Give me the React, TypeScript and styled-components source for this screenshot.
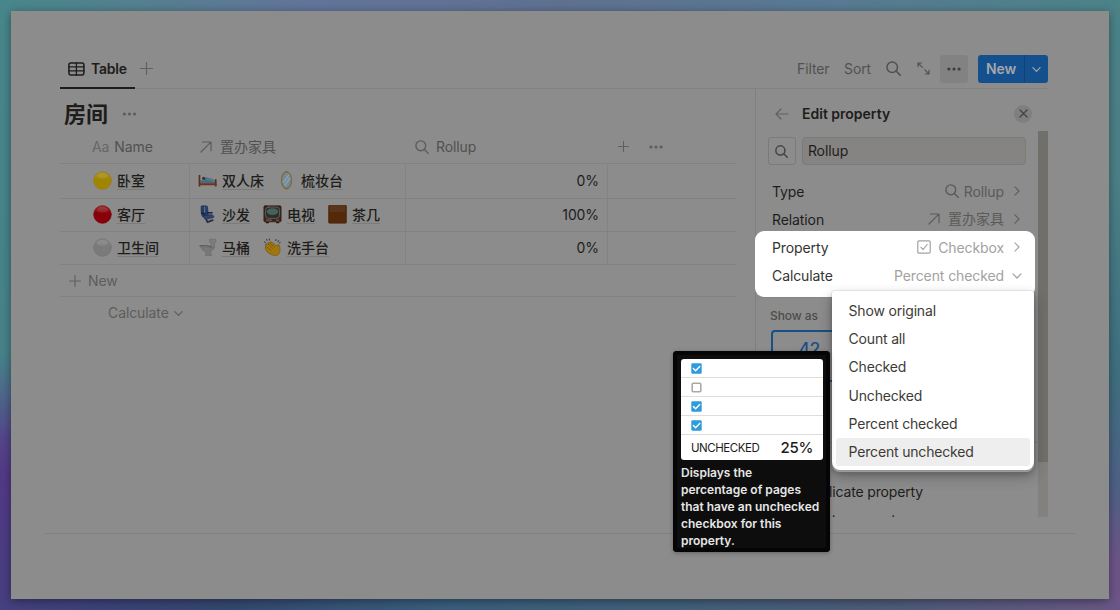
import React from "react";
import styled, { createGlobalStyle, css } from "styled-components";

const ink = "#1e1d1b";
const line = "#818180";

const GlobalStyle = createGlobalStyle`
  * { box-sizing: border-box; }
  body {
    margin: 0;
    width: 1120px;
    height: 610px;
    overflow: hidden;
    font-family: Inter, "Noto Sans CJK SC", sans-serif;
    font-size: 14px;
    letter-spacing: -0.1px;
    color: ${ink};
    -webkit-font-smoothing: antialiased;
  }
`;

const Desktop = styled.div`
  width: 1120px;
  height: 610px;
  padding: 11px;
  background:
    linear-gradient(90deg, #47878b 0, #54808f 12%, #63749a 28%, #5f7191 50%, #587a92 75%, #4b8388 100%) top / 100% 11px no-repeat,
    linear-gradient(90deg, #46407f 0, #3d4379 9%, #34486f 20%, #3a5f7e 40%, #42607a 60%, #4e5c78 80%, #6a5787 100%) bottom / 100% 11px no-repeat,
    linear-gradient(180deg, #47878b 0, #47828a 58%, #4d6b8b 64%, #54458a 72%, #533988 78%, #46407f 100%) left / 50% 100% no-repeat,
    linear-gradient(180deg, #4b8388 0, #4a8087 30%, #3f6f80 62%, #4f6187 80%, #6d5488 92%, #6f5588 100%) right / 50% 100% no-repeat;
`;

const Card = styled.main`
  position: relative;
  width: 1098px;
  height: 588px;
  padding-top: 43px;
  background: #8c8c8c;
  box-shadow: 0 2px 9px rgba(0, 0, 0, 0.4);
`;

const Toolbar = styled.header`
  display: flex;
  justify-content: space-between;
  width: 988px;
  height: 35px;
  margin-left: 49px;
  border-bottom: 1px solid ${line};
`;

const ToolGroup = styled.div`
  display: flex;
  align-items: center;
  height: 29px;
`;

const ViewTab = styled.div`
  display: flex;
  align-items: center;
  gap: 6px;
  width: 75px;
  height: 35px;
  margin: 0 5px -6px 0;
  padding: 0 0 4px 8px;
  border-bottom: 2px solid ${ink};
  font-weight: 600;
  letter-spacing: -0.25px;
`;

const ToolText = styled.span`
  width: ${(p: { $w: number }) => p.$w}px;
  white-space: nowrap;
  color: #52514f;
`;

const MoreButton = styled.div`
  display: flex;
  align-items: center;
  justify-content: center;
  width: 28px;
  height: 28px;
  margin-left: 10px;
  border-radius: 3px;
  background: #828282;
`;

const NewButton = styled.div`
  display: flex;
  width: 70px;
  height: 28px;
  margin-left: 10px;
  border-radius: 3px;
  background: #15508e;
  color: #a5a7ab;
  font-weight: 600;
  overflow: hidden;
`;

const NewLabel = styled.span`
  width: 47px;
  padding-left: 8px;
  line-height: 28px;
  border-right: 1px solid #114377;
`;

const NewCaret = styled.span`
  display: flex;
  flex: 1;
  align-items: center;
  justify-content: center;
`;

const Content = styled.div`
  display: flex;
  justify-content: space-between;
  width: 988px;
  height: 428px;
  margin-left: 49px;
`;

const Database = styled.section`
  width: 676px;
`;

const TitleRow = styled.div`
  display: flex;
  align-items: center;
  gap: 14px;
  height: 41px;
  padding: 9px 0 0 4px;
`;

const Title = styled.h1`
  margin: 0;
  font-size: 22px;
  line-height: 30px;
  font-weight: 700;
`;

const TableRow = styled.div`
  display: grid;
  grid-template-columns: 130px 216px 202px 128px;
  height: ${(p: { $h: number }) => p.$h}px;
  border-bottom: 1px solid ${line};
`;

const HeadCell = styled.div`
  display: flex;
  align-items: center;
  gap: ${(p: { $gap: number; $pad: number }) => p.$gap}px;
  padding-left: ${(p) => p.$pad}px;
  color: #52514f;
`;

const Aa = styled.span`
  color: #686765;
`;

const HanLabel = styled.span`
  margin-bottom: 2px;
  letter-spacing: 0;
`;

const Cell = styled.div<{ $pad?: number; $last?: boolean; $right?: boolean }>`
  display: flex;
  align-items: center;
  gap: 13px;
  padding: 0 0 1px ${(p) => p.$pad ?? 0}px;
  ${(p) => !p.$last && css`border-right: 1px solid #838382;`}
  ${(p) => p.$right && css`justify-content: flex-end; padding-right: 8px;`}
`;

const Chip = styled.span`
  display: flex;
  align-items: center;
  gap: 5px;
`;

const PageName = styled.span`
  font-size: 14px;
  line-height: 17px;
  letter-spacing: 0;
  font-weight: 500;
  border-bottom: 1px solid #7b7b7a;
`;

const NewRow = styled.div`
  display: flex;
  align-items: center;
  gap: 7px;
  height: 32px;
  padding-left: 9px;
  border-bottom: 1px solid ${line};
  color: #5e5d5b;
`;

const CalcRow = styled.div`
  display: flex;
  align-items: center;
  gap: 5px;
  height: 31px;
  padding-left: 48px;
  color: #5e5d5b;
`;

const Panel = styled.aside`
  width: 293px;
  box-shadow: inset 1px 0 0 #7f7f7f;
`;

const PanelHead = styled.div`
  display: flex;
  align-items: center;
  height: 42px;
  padding: 7px 16px 0 20px;
`;

const PanelTitle = styled.span`
  flex: 1;
  margin-left: 13px;
  font-weight: 600;
  letter-spacing: 0;
`;

const CloseButton = styled.span`
  display: flex;
  align-items: center;
  justify-content: center;
  width: 18px;
  height: 18px;
  border-radius: 50%;
  background: #7f7f7f;
`;

const PanelBody = styled.div`
  display: flex;
  height: 386px;
  overflow: hidden;
`;

const PanelMain = styled.div`
  width: 283px;
`;

const ScrollTrack = styled.div`
  width: 10px;
  height: 386px;
  background: #82817e;
`;

const ScrollThumb = styled.div`
  height: 331px;
  background: #716f6a;
`;

const SearchRow = styled.div`
  display: flex;
  gap: 6px;
  height: 46px;
  padding: 6px 12px 12px 13px;
`;

const IconBox = styled.div`
  display: flex;
  align-items: center;
  justify-content: center;
  width: 28px;
  border: 1px solid #7b7b7b;
  border-radius: 3px;
`;

const NameInput = styled.div`
  width: 225px;
  padding-left: 5px;
  line-height: 26px;
  border: 1px solid #7a7a79;
  border-radius: 4px;
  background: #858482;
`;

const PropRow = styled.div`
  display: flex;
  align-items: center;
  width: 280px;
  height: 28px;
  padding: 0 12px 0 17px;
`;

const PropValue = styled.span<{ $bright?: boolean }>`
  display: flex;
  align-items: center;
  gap: 7px;
  margin-left: auto;
  color: ${(p) => (p.$bright ? "#a3a29f" : "#5b5a58")};
`;

const ValueLabel = styled.span<{ $gap?: number }>`
  display: flex;
  align-items: center;
  gap: ${(p) => p.$gap ?? 0}px;
`;

const CaretSlot = styled.span`
  display: flex;
  justify-content: center;
  width: 12px;
`;

const Spotlight = styled.div`
  width: 280px;
  height: 66px;
  margin-top: -2px;
  padding-top: 2px;
  border-radius: 9px;
  background: #fff;
  color: #35342f;
`;

const ShowAs = styled.div`
  height: 33px;
  padding: 9px 0 0 15px;
  border-top: 1px solid #858585;
  font-size: 12px;
  line-height: 17px;
  font-weight: 500;
  color: #4d4c4a;
`;

const NumberCard = styled.div`
  width: 80px;
  height: 52px;
  margin-left: 16px;
  padding: 7px 3px 0 0;
  border: 2px solid #174f87;
  border-radius: 4px;
  color: #174f87;
  font-size: 17px;
  font-weight: 500;
  text-align: center;
`;

const Divider = styled.div`
  height: 61px;
  margin-bottom: 35px;
  border-bottom: 1px solid ${line};
`;

const ActionRow = styled.div`
  height: 28px;
  padding-left: 47.5px;
  line-height: 28px;
  letter-spacing: -0.15px;
  white-space: nowrap;
`;

const Footer = styled.div`
  width: 1030px;
  margin: 16px 0 0 34px;
  border-top: 1px solid ${line};
`;

const Menu = styled.div`
  position: absolute;
  left: 821px;
  top: 280px;
  width: 202px;
  height: 179px;
  padding: 6px 4px;
  border-radius: 3px 3px 8px 8px;
  background: #fff;
  box-shadow: 0 0 0 1px rgba(15, 15, 15, 0.06), 0 2px 1px rgba(190, 190, 190, 0.7), 0 6px 14px rgba(0, 0, 0, 0.3), 0 3px 5px rgba(0, 0, 0, 0.2);
`;

const MenuItem = styled.div<{ $active?: boolean }>`
  height: 28.2px;
  padding-left: 12.5px;
  line-height: 28px;
  letter-spacing: -0.17px;
  border-radius: 3px;
  color: #3d3b36;
  background: ${(p) => (p.$active ? "#eeeeee" : "transparent")};
`;

const Tooltip = styled.div`
  position: absolute;
  left: 662px;
  top: 340px;
  width: 157px;
  height: 201px;
  padding: 8px;
  border-radius: 4px;
  background: #0d0d0d;
  box-shadow: inset 0 0 0 4px #050505, 0 1px 4px rgba(0, 0, 0, 0.3);
`;

const Sample = styled.div`
  width: 142px;
  height: 101px;
  border-radius: 3px;
  background: #fff;
`;

const SampleRow = styled.div`
  display: flex;
  align-items: center;
  height: 19px;
  padding-left: 10px;
  border-bottom: 1px solid #dedede;
`;

const SampleTotal = styled.div`
  display: flex;
  align-items: center;
  justify-content: space-between;
  height: 24px;
  padding: 1px 10px 0;
  color: #1c1c1c;
  font-size: 11.5px;
  letter-spacing: -0.45px;
`;

const Percent = styled.strong`
  font-size: 15px;
  font-weight: 500;
  letter-spacing: -0.3px;
`;

const TipText = styled.p`
  width: 146px;
  margin: 4px 0 0;
  color: #e6e6e6;
  font-size: 12px;
  line-height: 17px;
  letter-spacing: 0;
  font-weight: 600;
  white-space: pre;
`;

const Svg = styled.svg`
  display: block;
  flex: none;
  fill: none;
  stroke: currentColor;
  stroke-linecap: round;
  stroke-linejoin: round;
`;

const Search = ({ s = 14, c = "#52514f", w = 1.4 }) => (
  <Svg width={s} height={s} viewBox="0 0 14 14" color={c} strokeWidth={w}>
    <circle cx="5.8" cy="5.8" r="4.9" />
    <path d="M9.4 9.4 13.2 13.2" />
  </Svg>
);
const Plus = ({ s = 12, c = "#60605e" }) => (
  <Svg width={s} height={s} viewBox="0 0 12 12" color={c} strokeWidth="1.1">
    <path d="M6 .5v11M.5 6h11" />
  </Svg>
);
const Dots = ({ c = "#52514f", s = 14 }) => (
  <Svg width={s} height="4" viewBox="0 0 14 4" color={c}>
    <g fill={c} stroke="none">
      <circle cx="1.9" cy="2" r="1.6" /><circle cx="7" cy="2" r="1.6" /><circle cx="12.1" cy="2" r="1.6" />
    </g>
  </Svg>
);
const Down = ({ c = "#5e5d5b", s = 9 }) => (
  <Svg width={s} height={s * 0.6 + 2} viewBox="0 -2 10 8" color={c} strokeWidth="1.3">
    <path d="M1 .9 5 5 9 .9" />
  </Svg>
);
const Right = ({ c = "#5e5d5b" }) => (
  <Svg width="6" height="10" viewBox="0 0 6 10" color={c} strokeWidth="1.1">
    <path d="M.9 .8 5 5 .9 9.2" />
  </Svg>
);
const UpRight = ({ c = "#5e5d5b" }) => (
  <Svg width="12" height="12" viewBox="0 0 12 12" color={c} strokeWidth="1.2">
    <path d="M1 11 10.800 1.200M2.200 1h8.800v8.800" />
  </Svg>
);

const SampleCheck = ({ on }: { on: boolean }) => (
  <Svg width="11" height="11" viewBox="0 0 11 11">
    {on ? (
      <>
        <rect x=".3" y=".3" width="10.4" height="10.4" rx="1.3" fill="#2e9bdc" stroke="none" />
        <path d="M2.4 5.6 4.6 7.8 8.7 3.4" stroke="#fff" strokeWidth="1.4" />
      </>
    ) : (
      <rect x="1.2" y="1.2" width="8.6" height="8.6" rx="1" stroke="#a9a9a9" strokeWidth="1.6" />
    )}
  </Svg>
);

const ballColors: Record<string, string[]> = {
  yellow: ["#a99225", "#a08600", "#a17a00"],
  red: ["#9b3030", "#87000a", "#7e0008"],
  white: ["#858585", "#7a7a7a", "#727272"],
};

const Ball = ({ kind }: { kind: string }) => {
  const [top, mid, rim] = ballColors[kind];
  return (
    <Svg width="19" height="19" viewBox="0 0 19 19">
      <defs>
        <linearGradient id={kind} x1="0" y1="0" x2="0" y2="1">
          <stop offset="0" stopColor={top} />
          <stop offset=".45" stopColor={mid} />
          <stop offset="1" stopColor={mid} />
        </linearGradient>
      </defs>
      <circle cx="9.5" cy="9.5" r="8.8" fill={`url(#${kind})`} stroke={rim} strokeWidth=".7" />
      <ellipse cx="9.5" cy="4.8" rx="5.5" ry="2.8" fill="#fff" opacity=".09" stroke="none" />
    </Svg>
  );
};

const emojis: Record<string, React.ReactNode> = {
  bed: (
    <>
      <path d="M2 11.800V8.200c3-1.900 6-2.100 8-1.500 3 .6 5 1.400 6.300 2.700v2.400z" fill="#486a80" stroke="none" />
      <path d="M2 7.400c1.400-1.200 3-1.200 4.200-.4L6 9H2z" fill="#8b989e" stroke="none" />
      <circle cx="5.200" cy="7.200" r="1.600" fill="#2d3b47" stroke="none" />
      <path d="M8 8.200c3 0 5.500.5 8 2" stroke="#6a8799" strokeWidth=".8" />
      <path d="M1.200 3.800V15M17 8v7" stroke="#5e2b16" strokeWidth="1.600" strokeLinecap="butt" />
      <path d="M1.500 12.800h15.500" stroke="#6e3218" strokeWidth="2" />
    </>
  ),
  mirror: (
    <>
      <ellipse cx="9" cy="9" rx="4.9" ry="8.1" fill="#71899b" stroke="#806a35" strokeWidth="1.2" />
      <path d="M6 11 11 4M7.5 14 12.3 7" stroke="#8fa2af" strokeWidth="1.4" />
      <path d="M8 .7h2M8 17.3h2" stroke="#80632a" strokeWidth="1" />
    </>
  ),
  seat: (
    <>
      <path d="M7.500 13.400 9 16.600 14 14.800" stroke="#29303c" strokeWidth="1.800" />
      <path d="M3 1.200c2-.7 5-.5 6 .2l.8 9-5.800.8C2.800 8.500 2.300 4 3 1.200z" fill="#273c65" stroke="#1e2e50" strokeWidth=".6" />
      <path d="M5 10.400 12.500 9.300c1.800.3 2.800 1.400 2.600 2.800l-7.500 1.800C5.600 13.400 4.800 12 5 10.400z" fill="#2e4674" stroke="#1d2b4b" strokeWidth=".6" />
      <path d="M3.500 8.200h3M9.500 7.500h4" stroke="#1c2538" strokeWidth="1.600" />
      <path d="M6.200 2V7" stroke="#60708c" strokeWidth="1.200" />
    </>
  ),
  tv: (
    <>
      <rect x=".6" y=".8" width="16.800" height="15.600" rx="1.300" fill="#3e2218" stroke="#2f180f" strokeWidth=".6" />
      <rect x="2.100" y="2" width="13.800" height="11" rx="3.200" fill="#28302f" stroke="#666a66" strokeWidth=".8" />
      <ellipse cx="9" cy="6.400" rx="5.600" ry="3.300" fill="#4b5f5b" stroke="none" />
      <path d="M3 14.700h5M13 14.700h2" stroke="#8a755c" strokeWidth=".9" />
      <path d="M3 17.200h2M13 17.200h2" stroke="#2b1710" strokeWidth="1.200" />
    </>
  ),
  brown: (
    <>
      <rect x=".3" y=".3" width="17.400" height="17.400" rx=".8" fill="#542909" stroke="#4b2308" strokeWidth=".6" />
      <rect x="1.500" y="1" width="15" height="6" fill="#5e3a24" stroke="none" opacity=".7" />
    </>
  ),
  toilet: (
    <>
      <path d="M11.300 1.200h5.900v3h-1l-.7 5h-3.200l.2-5h-1.200z" fill="#7c7c7c" stroke="#6c6c6c" strokeWidth=".6" />
      <path d="M3 9h12.500c-.5 2.200-2 3.600-4 4l1.500 4H7l.7-3.600C4.800 12.800 3.200 11.200 3 9z" fill="#787878" stroke="#696969" strokeWidth=".6" />
      <path d="M1.800 7.800c3-.6 7-.4 10.500.6" stroke="#5b5b5b" strokeWidth="1.300" />
    </>
  ),
  clap: (
    <>
      <path d="M2.500 6.200c-.8 2.200-.7 4.900.8 6.700 2 2.400 5.600 4 8.800 4.300 1.900 0 4.200-2.300 4.200-4.500.3-2.500-.3-4.900-1.100-6.100-.8-.6-1.400.2-1.300 1.600L8 3.800c-1-.8-2 .2-1.300 1.200C5.300 3.800 4 4.700 4.800 6 3.600 5 2.400 5.300 2.500 6.200z" fill="#a0760f" stroke="#6b480b" strokeWidth=".5" />
      <path d="M4.800 6 9 10M6.700 5 11 9M3.200 8.500 7.500 12" stroke="#6f4c0a" strokeWidth=".6" />
      <path d="M1 3.800 2 4.300M3.200 1.300l.6 1M6 .8V1.900M12.500 1.500l-.5 1M15 2.500l-.8.8M16.500 4.500l-1 .3" stroke="#3c4046" strokeWidth="1" />
    </>
  ),
};

const Emoji = ({ kind }: { kind: string }) =>
  ballColors[kind] ? <Ball kind={kind} /> : <Svg width="19" height="18.5" viewBox="0 0 18 18">{emojis[kind]}</Svg>;

const rows = [
  { h: 35, name: ["yellow", "卧室"], items: [["bed", "双人床"], ["mirror", "梳妆台"]], value: "0%" },
  { h: 33, name: ["red", "客厅"], items: [["seat", "沙发"], ["tv", "电视"], ["brown", "茶几"]], value: "100%" },
  { h: 33, name: ["white", "卫生间"], items: [["toilet", "马桶"], ["clap", "洗手台"]], value: "0%" },
];

const options = ["Show original", "Count all", "Checked", "Unchecked", "Percent checked", "Percent unchecked"];

const ExpandSlot = styled.span`
  margin-left: 16px;
  color: #52514f;
`;

export default function App() {
  return (
    <Desktop>
      <GlobalStyle />
      <Card>
        <Toolbar>
          <ToolGroup>
            <ViewTab>
              <Svg width="17" height="14" viewBox="0 0 17 14" strokeWidth="1.5">
                <rect x=".9" y=".9" width="15" height="12" rx="1.800" />
                <path d="M1 4.900h15M1 8.900h15M8.400 1v12" strokeWidth="1.300" />
              </Svg>
              Table
            </ViewTab>
            <Plus s={13} />
          </ToolGroup>
          <ToolGroup>
            <ToolText $w={47}>Filter</ToolText>
            <ToolText $w={42}>Sort</ToolText>
            <Search s={15} />
            <ExpandSlot>
              <Svg width="13" height="13" viewBox="0 0 13 13" strokeWidth="1.200">
                <path d="M1 4.600V1h3.600M1.200 1.200 5.300 5.300M12 8.400V12H8.400M11.800 11.800 7.700 7.700" />
              </Svg>
            </ExpandSlot>
            <MoreButton><Dots c="#3f3e3c" /></MoreButton>
            <NewButton>
              <NewLabel>New</NewLabel>
              <NewCaret><Down c="#a5a7ab" /></NewCaret>
            </NewButton>
          </ToolGroup>
        </Toolbar>

        <Content>
          <Database>
            <TitleRow>
              <Title>房间</Title>
              <Dots c="#5e5d5b" s={15} />
            </TitleRow>
            <TableRow $h={34}>
              <HeadCell $pad={32} $gap={5}><Aa>Aa</Aa>Name</HeadCell>
              <HeadCell $pad={10} $gap={8}><UpRight /><HanLabel>置办家具</HanLabel></HeadCell>
              <HeadCell $pad={9} $gap={7}><Search c="#5e5d5b" />Rollup</HeadCell>
              <HeadCell $pad={10} $gap={20}><Plus s={11} /><Dots s={14} c="#5e5d5b" /></HeadCell>
            </TableRow>
            {rows.map((r) => (
              <TableRow $h={r.h} key={r.name[1]}>
                <Cell $pad={33}>
                  <Chip><Emoji kind={r.name[0]} /><PageName>{r.name[1]}</PageName></Chip>
                </Cell>
                <Cell $pad={8}>
                  {r.items.map(([icon, label]) => (
                    <Chip key={label}><Emoji kind={icon} /><PageName>{label}</PageName></Chip>
                  ))}
                </Cell>
                <Cell $right>{r.value}</Cell>
                <Cell $last />
              </TableRow>
            ))}
            <NewRow><Plus />New</NewRow>
            <CalcRow>Calculate<Down /></CalcRow>
          </Database>

          <Panel>
            <PanelHead>
              <Svg width="14" height="12" viewBox="0 0 14 12" strokeWidth="1.200" color="#60605e">
                <path d="M13 6H1M6 1 1 6 6 11" />
              </Svg>
              <PanelTitle>Edit property</PanelTitle>
              <CloseButton>
                <Svg width="9" height="9" viewBox="0 0 9 9" strokeWidth="1.400" color="#454442">
                  <path d="M1 1 8 8M8 1 1 8" />
                </Svg>
              </CloseButton>
            </PanelHead>
            <PanelBody>
              <PanelMain>
                <SearchRow>
                  <IconBox><Search s={13} c="#454442" w={1.600} /></IconBox>
                  <NameInput>Rollup</NameInput>
                </SearchRow>
                <PropRow>
                  Type
                  <PropValue>
                    <ValueLabel $gap={5}><Search c="#5b5a58" />Rollup</ValueLabel>
                    <CaretSlot><Right /></CaretSlot>
                  </PropValue>
                </PropRow>
                <PropRow>
                  Relation
                  <PropValue>
                    <ValueLabel $gap={8}><UpRight /><HanLabel>置办家具</HanLabel></ValueLabel>
                    <CaretSlot><Right /></CaretSlot>
                  </PropValue>
                </PropRow>
                <Spotlight>
                  <PropRow>
                    Property
                    <PropValue $bright>
                      <ValueLabel $gap={7}>
                        <Svg width="14" height="14" viewBox="0 0 14 14" strokeWidth="1.200">
                          <rect x=".8" y=".8" width="12.400" height="12.400" rx="1.200" />
                          <path d="M4 7.300 6.200 9.500 10.100 4.500" />
                        </Svg>
                        Checkbox
                      </ValueLabel>
                      <CaretSlot><Right c="#a3a29f" /></CaretSlot>
                    </PropValue>
                  </PropRow>
                  <PropRow>
                    Calculate
                    <PropValue $bright>
                      <ValueLabel>Percent checked</ValueLabel>
                      <CaretSlot><Down c="#a3a29f" s={10} /></CaretSlot>
                    </PropValue>
                  </PropRow>
                </Spotlight>
                <ShowAs>Show as</ShowAs>
                <NumberCard>42</NumberCard>
                <Divider />
                <ActionRow>Duplicate property</ActionRow>
                <ActionRow>Delete property</ActionRow>
              </PanelMain>
              <ScrollTrack><ScrollThumb /></ScrollTrack>
            </PanelBody>
          </Panel>
        </Content>
        <Footer />

        <Menu>
          {options.map((o, i) => <MenuItem key={o} $active={i === options.length - 1}>{o}</MenuItem>)}
        </Menu>
        <Tooltip>
          <Sample>
            {[true, false, true, true].map((on, i) => <SampleRow key={i}><SampleCheck on={on} /></SampleRow>)}
            <SampleTotal>UNCHECKED<Percent>25%</Percent></SampleTotal>
          </Sample>
          <TipText>{"Displays the\npercentage of pages\nthat have an unchecked\ncheckbox for this\nproperty."}</TipText>
        </Tooltip>
      </Card>
    </Desktop>
  );
}
